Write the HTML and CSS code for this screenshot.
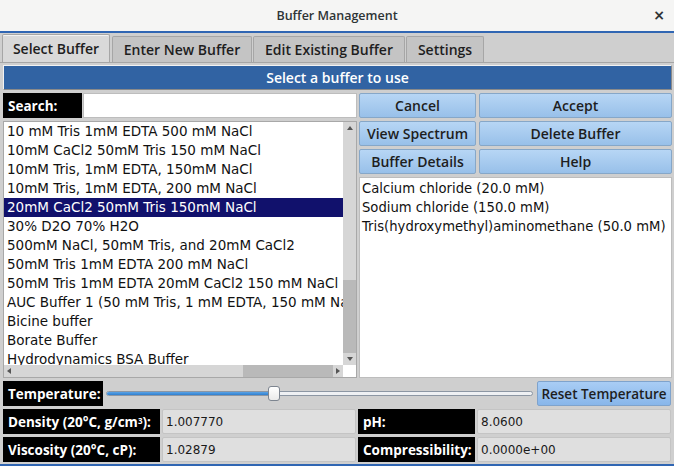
FILE: index.html
```html
<!DOCTYPE html>
<html>
<head>
<meta charset="utf-8">
<link rel="stylesheet" href="styles.css">
</head>
<body>
<div class="window">
  <header class="titlebar">
    <span class="title">Buffer Management</span>
    <span class="close">×</span>
  </header>
  <nav class="tabs">
    <div class="tab tab-active tab-1">Select Buffer</div>
    <div class="tab tab-2">Enter New Buffer</div>
    <div class="tab tab-3">Edit Existing Buffer</div>
    <div class="tab tab-4">Settings</div>
  </nav>
  <main class="panel">
    <div class="banner">Select a buffer to use</div>
    <div class="top-grid">
      <div class="left-col">
        <div class="search-row">
          <div class="label">Search:</div>
          <div class="input"></div>
        </div>
        <div class="list">
          <div class="list-items">
            <div class="item">10 mM Tris 1mM EDTA 500 mM NaCl</div>
            <div class="item">10mM CaCl2 50mM Tris 150 mM NaCl</div>
            <div class="item">10mM Tris, 1mM EDTA, 150mM NaCl</div>
            <div class="item">10mM Tris, 1mM EDTA, 200 mM NaCl</div>
            <div class="item item-selected">20mM CaCl2 50mM Tris 150mM NaCl</div>
            <div class="item">30% D2O 70% H2O</div>
            <div class="item">500mM NaCl, 50mM Tris, and 20mM CaCl2</div>
            <div class="item">50mM Tris 1mM EDTA 200 mM NaCl</div>
            <div class="item">50mM Tris 1mM EDTA 20mM CaCl2 150 mM NaCl</div>
            <div class="item">AUC Buffer 1 (50 mM Tris, 1 mM EDTA, 150 mM NaCl)</div>
            <div class="item">Bicine buffer</div>
            <div class="item">Borate Buffer</div>
            <div class="item">Hydrodynamics BSA Buffer</div>
          </div>
          <div class="vscroll">
            <div class="arrow arrow-up"></div>
            <div class="vtrack"><div class="vthumb"></div></div>
            <div class="arrow arrow-down"></div>
          </div>
          <div class="hscroll">
            <div class="arrow arrow-left"></div>
            <div class="htrack"><div class="hthumb"></div></div>
            <div class="arrow arrow-right"></div>
          </div>
          <div class="corner"></div>
        </div>
      </div>
      <div class="right-col">
        <div class="btn-grid">
          <div class="btn">Cancel</div>
          <div class="btn">Accept</div>
          <div class="btn">View Spectrum</div>
          <div class="btn">Delete Buffer</div>
          <div class="btn">Buffer Details</div>
          <div class="btn">Help</div>
        </div>
        <div class="info">
          <div class="info-line">Calcium chloride (20.0 mM)</div>
          <div class="info-line">Sodium chloride (150.0 mM)</div>
          <div class="info-line">Tris(hydroxymethyl)aminomethane (50.0 mM)</div>
        </div>
      </div>
    </div>
    <div class="temp-row">
      <div class="label">Temperature:</div>
      <div class="slider">
        <div class="groove">
          <div class="groove-fill"></div>
          <div class="handle"></div>
        </div>
      </div>
      <div class="btn btn-reset">Reset Temperature</div>
    </div>
    <div class="props">
      <div class="label">Density (20°C, g/cm<sup>3</sup>):</div>
      <div class="value">1.007770</div>
      <div class="label">pH:</div>
      <div class="value">8.0600</div>
      <div class="label">Viscosity (20°C, cP):</div>
      <div class="value">1.02879</div>
      <div class="label">Compressibility:</div>
      <div class="value">0.0000e+00</div>
    </div>
  </main>
</div>
</body>
</html>
```
FILE: styles.css
```css
* { box-sizing: border-box; }
html, body { margin: 0; padding: 0; }
body {
  width: 674px;
  height: 466px;
  overflow: hidden;
  background: #cfcfcf;
  font-family: "Open Sans", "DejaVu Sans", sans-serif;
}
.window {
  width: 674px;
  height: 466px;
  display: flex;
  flex-direction: column;
  border-bottom: 2px solid #3066b3;
}
.titlebar {
  height: 33px;
  flex: none;
  background: #f5f5f4;
  border-bottom: 2px solid #3066b3;
  display: flex;
  align-items: center;
  justify-content: center;
  position: relative;
}
.title {
  font-size: 12.5px;
  font-weight: 600;
  color: #2e3436;
}
.close {
  position: absolute;
  right: 9px;
  top: 7px;
  font-size: 14px;
  font-weight: 700;
  color: #2e3436;
  font-family: "DejaVu Sans", sans-serif;
}
.tabs {
  height: 29px;
  flex: none;
  display: flex;
  align-items: flex-end;
  padding-left: 2px;
  gap: 1px;
}
.tab {
  height: 26px;
  background: #c4c4c4;
  border: 1px solid #a6a6a6;
  border-bottom: none;
  border-radius: 2px 2px 0 0;
  display: flex;
  align-items: center;
  justify-content: center;
  font-size: 14px;
  font-weight: 600;
  color: #1e1e1e;
  white-space: nowrap;
}
.tab-active {
  height: 28px;
  background: #d9d9d9;
  border-color: #a6a6a6;
  box-shadow: inset 0 1px 0 #f2f2f2;
}
.tab-1 { width: 108px; }
.tab-2 { width: 140px; margin-left: 1px; }
.tab-3 { width: 152px; }
.tab-4 { width: 78px; }
.panel {
  flex: 1;
  border-top: 1px solid #a6a6a6;
  padding: 2px 2px 0 3px;
  display: flex;
  flex-direction: column;
  gap: 3px;
}
.banner {
  height: 25px;
  flex: none;
  background: #3163a3;
  border: 1px solid;
  border-color: #f2f2f2 #8a8a8a #8a8a8a #f2f2f2;
  color: #ffffff;
  font-size: 14px;
  font-weight: 600;
  display: flex;
  align-items: center;
  justify-content: center;
}
.top-grid {
  display: grid;
  grid-template-columns: 354px 313px;
  column-gap: 2px;
  height: 285px;
}
.left-col, .right-col {
  display: flex;
  flex-direction: column;
  gap: 3px;
}
.search-row {
  height: 25px;
  display: flex;
  gap: 1px;
}
.label {
  background: #000000;
  color: #ffffff;
  font-size: 13.5px;
  font-weight: 700;
  display: flex;
  align-items: center;
  padding-left: 5px;
  white-space: nowrap;
}
.label sup {
  font-size: 8px;
  line-height: 0;
  position: relative;
  top: -1px;
}
.search-row .label { width: 79px; }
.input {
  flex: 1;
  background: #ffffff;
  border: 1px solid #bdbdbd;
}
.list {
  height: 257px;
  background: #ffffff;
  border: 1px solid #a8a8a8;
  display: grid;
  grid-template-columns: 1fr 13px;
  grid-template-rows: 1fr 12px;
  overflow: hidden;
}
.list-items {
  overflow: hidden;
  font-family: "DejaVu Sans", sans-serif;
  font-size: 13.5px;
  color: #111111;
}
.item {
  height: 19px;
  line-height: 19px;
  padding-left: 3px;
  white-space: nowrap;
}
.item-selected {
  background: #11116c;
  color: #ffffff;
}
.vscroll {
  display: flex;
  flex-direction: column;
  background: #d6d6d6;
}
.vtrack {
  flex: 1;
  display: flex;
  flex-direction: column;
  justify-content: flex-end;
}
.vthumb {
  height: 73px;
  background: #b9b9b9;
}
.hscroll {
  display: flex;
  background: #d6d6d6;
}
.htrack {
  flex: 1;
  display: flex;
  justify-content: flex-end;
}
.hthumb {
  width: 90px;
  background: #b9b9b9;
}
.corner { background: #ffffff; }
.arrow {
  flex: none;
  width: 13px;
  height: 12px;
  display: flex;
  align-items: center;
  justify-content: center;
}
.arrow::before {
  content: "";
  width: 0;
  height: 0;
  border: 3px solid transparent;
}
.arrow-up::before { border-bottom: 4px solid #555; border-top-width: 0; }
.arrow-down::before { border-top: 4px solid #555; border-bottom-width: 0; }
.arrow-left { width: 10px; }
.arrow-right { width: 10px; }
.arrow-left::before { border-right: 4px solid #555; border-left-width: 0; }
.arrow-right::before { border-left: 4px solid #555; border-right-width: 0; }
.btn-grid {
  display: grid;
  grid-template-columns: 117px 193px;
  grid-auto-rows: 25px;
  gap: 3px;
}
.btn {
  background: linear-gradient(#b7d6f5, #98c0e9);
  border: 1px solid #86a7c8;
  border-radius: 2px;
  display: flex;
  align-items: center;
  justify-content: center;
  font-size: 14px;
  font-weight: 600;
  color: #1e1e1e;
  white-space: nowrap;
}
.info {
  flex: 1;
  background: #ffffff;
  border: 1px solid #bdbdbd;
  padding: 1px 0 0 2px;
  font-family: "DejaVu Sans", sans-serif;
  font-size: 13.2px;
  color: #111111;
}
.info-line {
  height: 19px;
  line-height: 19px;
  white-space: nowrap;
}
.temp-row {
  height: 25px;
  display: grid;
  grid-template-columns: 100px 1fr 134px;
  column-gap: 3px;
  margin-right: 1px;
}
.slider {
  display: flex;
  align-items: center;
  padding-right: 1px;
}
.groove {
  flex: 1;
  height: 5px;
  border: 1px solid #8c96a3;
  border-radius: 3px;
  background: #eef0f3;
  position: relative;
}
.groove-fill {
  width: 164px;
  height: 100%;
  background: linear-gradient(#5aa3e6, #2f7fcf);
  border-radius: 3px 0 0 3px;
}
.handle {
  position: absolute;
  left: 161px;
  top: -6px;
  width: 12px;
  height: 15px;
  background: linear-gradient(#ffffff, #eaeaea);
  border: 1px solid #7d8590;
  border-radius: 3px;
}
.btn-reset {
  background: linear-gradient(#a9cdf5, #88b6ea);
  border-color: #7fa3cc;
  font-size: 13.5px;
}
.props {
  display: grid;
  grid-template-columns: 157px 194px 117px 194px;
  grid-auto-rows: 25px;
  gap: 3px 2px;
}
.value {
  background: #dfdfdf;
  border: 1px solid #c4c4c4;
  border-radius: 2px;
  font-family: "DejaVu Sans", sans-serif;
  font-size: 12px;
  color: #1a1a1a;
  display: flex;
  align-items: center;
  padding-left: 3px;
}
```
